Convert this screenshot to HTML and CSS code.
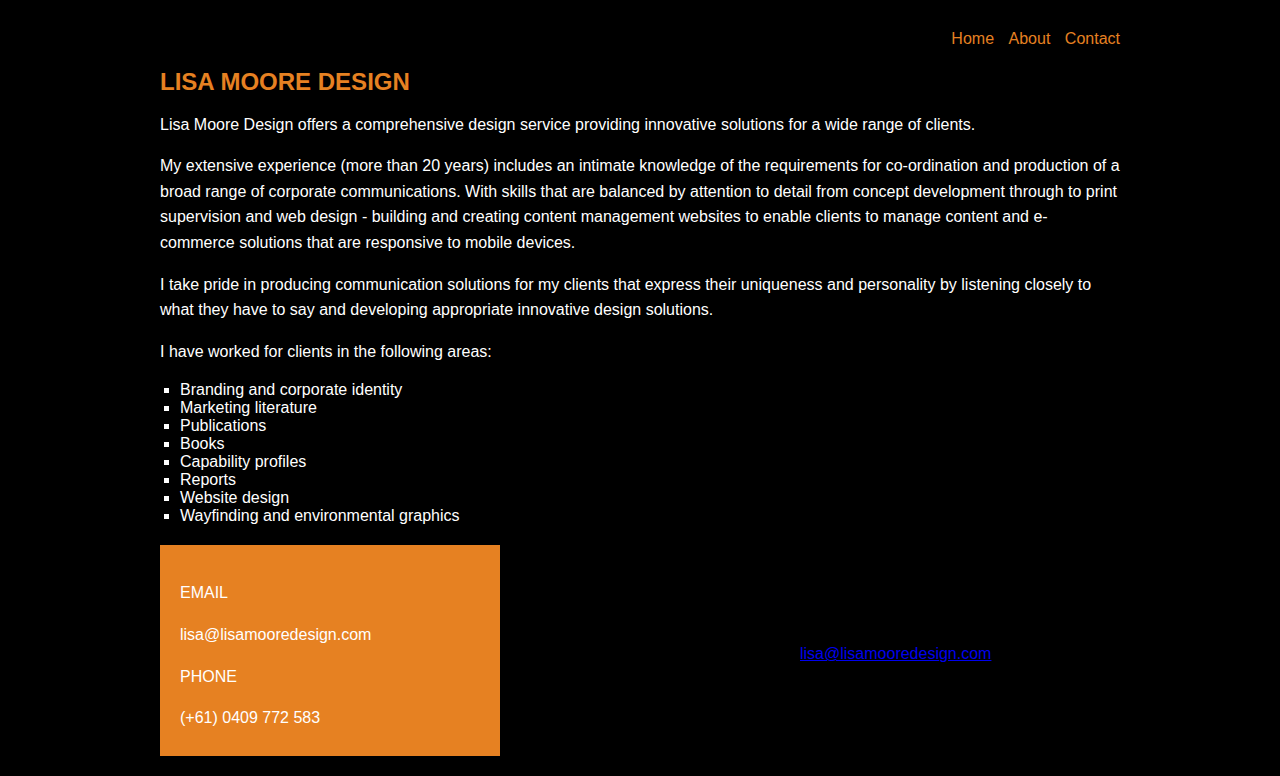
FILE: index.html
```html
<!DOCTYPE html>
<html lang="en">
<head>
<meta charset="utf-8">
<title>Lisa Moore Design</title>
<link rel="stylesheet" href="styles.css">
</head>
<body>
<div class="page">
  <nav class="nav">
    <a href="#">Home</a>
    <a href="#">About</a>
    <a href="#">Contact</a>
  </nav>
  <h1 class="title">LISA MOORE DESIGN</h1>
  <p>Lisa Moore Design offers a comprehensive design service providing innovative solutions for a wide range of clients.</p>
  <p>My extensive experience (more than 20 years) includes an intimate knowledge of the requirements for co-ordination and production of a broad range of corporate communications. With skills that are balanced by attention to detail from concept development through to print supervision and web design - building and creating content management websites to enable clients to manage content and e-commerce solutions that are responsive to mobile devices.</p>
  <p>I take pride in producing communication solutions for my clients that express their uniqueness and personality by listening closely to what they have to say and developing appropriate innovative design solutions.</p>
  <p>I have worked for clients in the following areas:</p>
  <ul class="areas">
    <li>Branding and corporate identity</li>
    <li>Marketing literature</li>
    <li>Publications</li>
    <li>Books</li>
    <li>Capability profiles</li>
    <li>Reports</li>
    <li>Website design</li>
    <li>Wayfinding and environmental graphics</li>
  </ul>
  <div class="contact-row">
    <div class="contact-box">
      <p>EMAIL</p>
      <p>lisa@lisamooredesign.com</p>
      <p>PHONE</p>
      <p>(+61) 0409 772 583</p>
    </div>
    <div class="contact-link">
      <a href="#">lisa@lisamooredesign.com</a>
    </div>
  </div>
</div>
</body>
</html>
```
FILE: styles.css
```css
html, body {
  margin: 0;
  padding: 0;
  background: #000;
}
body {
  color: #fff;
  font-family: "Liberation Sans", Arial, sans-serif;
  font-size: 16px;
  line-height: 1.6;
}
.page {
  width: 960px;
  margin: 0 auto;
  padding: 26px 0 20px;
}
.nav {
  display: flex;
  justify-content: flex-end;
  gap: 14.5px;
  margin-bottom: 16px;
}
.nav a {
  color: #e68122;
  text-decoration: none;
}
.title {
  margin: 0;
  color: #e68122;
  font-size: 24px;
  line-height: 28px;
  font-weight: bold;
}
p {
  margin: 16px 0;
}
.areas {
  list-style: square;
  margin: 17px 0 0;
  padding-left: 20px;
  line-height: 18px;
}
.contact-row {
  display: flex;
  align-items: center;
  margin-top: 20px;
}
.contact-box {
  width: 340px;
  box-sizing: border-box;
  background: #e68122;
  padding: 19px 20px 9px;
}
.contact-link {
  margin-left: 300px;
  margin-top: 7px;
}
.contact-link a {
  color: #0000ee;
  text-decoration: underline;
}
```
